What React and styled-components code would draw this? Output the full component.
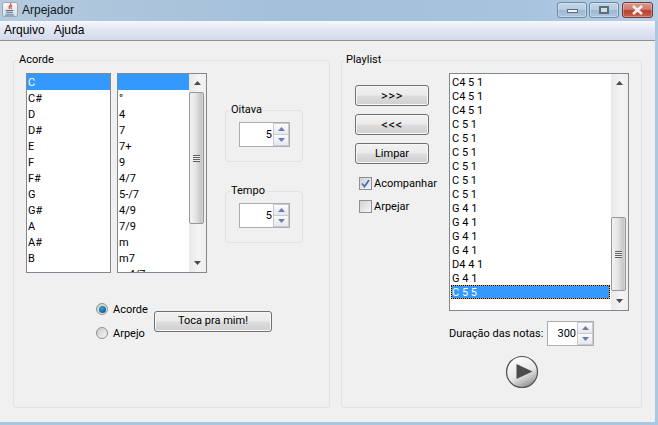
import styled, { createGlobalStyle } from 'styled-components';

const Global = createGlobalStyle`
    html, body {
        margin: 0;
        padding: 0;
        background: #f0f0f0;
    }
    * {
        box-sizing: border-box;
    }
`;

const Frame = styled.div`
    width: 658px;
    height: 425px;
    display: flex;
    flex-direction: column;
    overflow: hidden;
    font-family: Roboto, 'Liberation Sans', Arial, sans-serif;
    font-size: 11px;
    color: #000;
    background: #a9c8e2;
`;

const TitleBar = styled.div`
    height: 21px;
    flex: none;
    display: flex;
    align-items: center;
    padding: 0 5px 2px 2px;
    background: linear-gradient(90deg, #b4cade 0%, #a3bfda 45%, #a7c3de 80%, #b5cfe6 100%);
`;

const AppIcon = styled.div`
    width: 16px;
    height: 15px;
    flex: none;
    border: 1px solid #9aa7b5;
    border-radius: 2px;
    background: linear-gradient(#f7f7f7, #d8dde2);
    display: flex;
    align-items: center;
    justify-content: center;
`;

const Title = styled.span`
    margin-left: 4px;
    font-family: 'Liberation Sans', Arial, sans-serif;
    font-size: 12px;
    flex: 1;
    color: #10171f;
`;

const WinButton = styled.div`
    width: ${(props) => (props.close ? 31 : 30)}px;
    height: 16px;
    margin-left: ${(props) => (props.close ? 3 : 2)}px;
    border: 1px solid ${(props) => (props.close ? '#6e3a3a' : '#6f8aa6')};
    border-radius: 3px;
    display: flex;
    align-items: center;
    justify-content: center;
    background: ${(props) =>
        props.close
            ? 'linear-gradient(#dc9a8e 0%, #cf7a6c 45%, #b8402f 55%, #c9604f 100%)'
            : 'linear-gradient(#c3d6e8 0%, #b7cde2 45%, #9db7d2 55%, #b0c8df 100%)'};
    box-shadow: inset 0 0 0 1px rgba(255, 255, 255, 0.3);
`;

const MinGlyph = styled.div`
    width: 11px;
    height: 4px;
    margin-top: 3px;
    background: #f2f4f6;
    border: 1px solid #5a6b80;
`;

const MaxGlyph = styled.div`
    width: 10px;
    height: 8px;
    background: #d4dde6;
    border: 2px solid #5d6b7b;
`;

const MenuBar = styled.div`
    height: 20px;
    flex: none;
    display: flex;
    align-items: center;
    gap: 9px;
    padding: 0 0 2px 4px;
    font-family: 'Liberation Sans', Arial, sans-serif;
    font-size: 12px;
    background: linear-gradient(#f6f8fd 0%, #e4e8f4 40%, #d3d9ec 100%);
    border-bottom: 1px solid #8e9297;
    margin-right: 3px;
`;

const Content = styled.div`
    flex: 1;
    display: flex;
    gap: 11px;
    align-items: flex-start;
    padding: 12px 0 0 13px;
    margin-right: 3px;
    margin-bottom: 3px;
    background: #f0f0f0;
`;

const Panel = styled.fieldset`
    margin: 0;
    padding: 0;
    min-width: 0;
    width: ${(props) => props.width}px;
    height: 355px;
    border: 1px solid #dce3e9;
    border-radius: 3px;
`;

const Legend = styled.legend`
    padding: 0 1px;
    margin-left: ${(props) => props.inset}px;
    height: 14px;
    line-height: 14px;
`;

const PanelBody = styled.div`
    display: flex;
    flex-direction: column;
    padding: 6px 0 0 12px;
`;

const TopRow = styled.div`
    display: flex;
`;

const ListBox = styled.div`
    width: ${(props) => props.width}px;
    height: ${(props) => props.height}px;
    margin-right: ${(props) => props.gap || 0}px;
    flex: none;
    display: flex;
    overflow: hidden;
    background: #fff;
    border: 1px solid #828790;
`;

const Rows = styled.div`
    flex: 1;
    min-width: 0;
    overflow: hidden;
`;

const PlaylistRows = styled(Rows)`
    padding: 1px 1px 0 1px;
`;

const Row = styled.div`
    height: ${(props) => props.h}px;
    line-height: ${(props) => props.h + 1}px;
    padding-left: ${(props) => props.indent}px;
    white-space: pre;
    background: ${(props) => (props.selected ? '#3399ff' : 'transparent')};
    color: ${(props) => (props.selected ? '#fff' : '#000')};
`;

const FocusedRow = styled(Row)`
    box-shadow: inset 0 0 0 1px #f0a030;
    outline: 1px dotted #000;
    outline-offset: -1px;
`;

const ScrollTrack = styled.div`
    width: 17px;
    flex: none;
    display: flex;
    flex-direction: column;
    background: linear-gradient(90deg, #e8e8e8, #f4f4f4 60%, #eeeeee);
`;

const ScrollArrow = styled.div`
    height: 18px;
    flex: none;
    display: flex;
    align-items: center;
    justify-content: center;
`;

const ScrollLane = styled.div`
    flex: 1;
    padding-top: ${(props) => props.offset}px;
`;

const Thumb = styled.div`
    width: 15px;
    height: ${(props) => props.height}px;
    border: 1px solid #989898;
    border-radius: 2px;
    display: flex;
    align-items: center;
    justify-content: center;
    background: linear-gradient(90deg, #f2f2f2 0%, #e4e4e4 45%, #c6c6c6 85%, #d8d8d8 100%);
`;

const Grip = styled.div`
    width: 7px;
    height: 7px;
    background: repeating-linear-gradient(#5f5f5f 0 1px, #eeeeee 1px 2px);
`;

const Groups = styled.div`
    margin-left: 18px;
    margin-top: 30px;
    display: flex;
    flex-direction: column;
    gap: 22px;
`;

const Group = styled.fieldset`
    margin: 0;
    padding: 5px 0 0 13px;
    min-width: 0;
    width: 78px;
    height: 59px;
    border: 1px solid #dce3e9;
    border-radius: 4px;
`;

const Spinner = styled.div`
    width: ${(props) => props.width}px;
    height: 25px;
    flex: none;
    display: flex;
    background: #fff;
    border: 1px solid #abadb3;
`;

const SpinValue = styled.div`
    flex: 1;
    text-align: right;
    line-height: 24px;
    padding-right: 1px;
`;

const SpinButtons = styled.div`
    width: 16px;
    flex: none;
    display: flex;
    flex-direction: column;
    padding: 1px;
    gap: 1px;
    background: #c8cacd;
`;

const SpinButton = styled.div`
    flex: 1;
    display: flex;
    align-items: center;
    justify-content: center;
    background: linear-gradient(#fbfbfb, #e6e8ee);
`;

const BottomRow = styled.div`
    display: flex;
    align-items: center;
    margin-top: 24px;
    padding-left: 70px;
`;

const RadioColumn = styled.div`
    width: 58px;
    display: flex;
    flex-direction: column;
`;

const OptionRow = styled.div`
    height: ${(props) => props.h}px;
    display: flex;
    align-items: center;
    gap: ${(props) => props.gap}px;
`;

const Radio = styled.div`
    width: 12px;
    height: 12px;
    flex: none;
    border-radius: 50%;
    border: 1px solid #8e8f8f;
    display: flex;
    align-items: center;
    justify-content: center;
    background: linear-gradient(135deg, #c9c9c9, #f8f8f8);
`;

const RadioDot = styled.div`
    width: 7px;
    height: 7px;
    border-radius: 50%;
    background: radial-gradient(circle at 40% 35%, #37a6d8, #0d5f8e 70%, #0a3f63);
`;

const Button = styled.div`
    width: ${(props) => props.width}px;
    height: 21px;
    border: 1px solid #707070;
    border-radius: 3px;
    display: flex;
    align-items: center;
    justify-content: center;
    padding-bottom: 1px;
    background: linear-gradient(#f2f2f2 0%, #ebebeb 48%, #dddddd 52%, #cfcfcf 100%);
    box-shadow: inset 0 0 0 1px #f8f8f8;
`;

const ChevronButton = styled(Button)`
    font-size: 13px;
    letter-spacing: 0.5px;
`;

const PlaylistBody = styled(PanelBody)`
    flex-direction: row;
    padding-left: 13px;
    gap: 20px;
`;

const Controls = styled.div`
    width: 74px;
    flex: none;
    padding-top: 12px;
    display: flex;
    flex-direction: column;
    gap: 8px;
`;

const Checks = styled.div`
    display: flex;
    flex-direction: column;
    padding-left: 4px;
    white-space: nowrap;
`;

const CheckBox = styled.div`
    width: 13px;
    height: 13px;
    flex: none;
    border: 1px solid #8e8f8f;
    display: flex;
    align-items: center;
    justify-content: center;
    background: linear-gradient(135deg, #d2d2d2, #f6f6f6);
`;

const PlaylistColumn = styled.div`
    display: flex;
    flex-direction: column;
`;

const Footer = styled.div`
    width: 145px;
    margin-top: 10px;
    display: flex;
    flex-direction: column;
    align-items: center;
    gap: 9px;
`;

const DurationRow = styled.div`
    width: 100%;
    display: flex;
    align-items: center;
    justify-content: space-between;
    white-space: nowrap;
`;

function Triangle({ up, color = '#4a4a4a', width = 7 }) {
    const h = Math.ceil(width / 2);
    return (
        <svg width={width} height={h} viewBox={`0 0 ${width} ${h}`}>
            <polygon
                points={up ? `0,${h} ${width},${h} ${width / 2},0` : `0,0 ${width},0 ${width / 2},${h}`}
                fill={color}
            />
        </svg>
    );
}

function Scrollbar({ offset, thumb }) {
    return (
        <ScrollTrack>
            <ScrollArrow>
                <Triangle up />
            </ScrollArrow>
            <ScrollLane offset={offset}>
                <Thumb height={thumb}>
                    <Grip />
                </Thumb>
            </ScrollLane>
            <ScrollArrow>
                <Triangle />
            </ScrollArrow>
        </ScrollTrack>
    );
}

function Spin({ value, width }) {
    return (
        <Spinner width={width}>
            <SpinValue>{value}</SpinValue>
            <SpinButtons>
                <SpinButton>
                    <Triangle up color="#6a7cb0" />
                </SpinButton>
                <SpinButton>
                    <Triangle color="#6a7cb0" />
                </SpinButton>
            </SpinButtons>
        </Spinner>
    );
}

const notes = ['C', 'C#', 'D', 'D#', 'E', 'F', 'F#', 'G', 'G#', 'A', 'A#', 'B'];
const chords = ['', '°', '4', '7', '7+', '9', '4/7', '5-/7', '4/9', '7/9', 'm', 'm7', 'm4/7'];
const playlist = [
    'C4 5 1', 'C4 5 1', 'C4 5 1',
    'C 5 1', 'C 5 1', 'C 5 1', 'C 5 1', 'C 5 1', 'C 5 1',
    'G 4 1', 'G 4 1', 'G 4 1', 'G 4 1',
    'D4 4 1', 'G 4 1',
];

export default function App() {
    return (
        <Frame>
            <Global />
            <TitleBar>
                <AppIcon>
                    <svg width="12" height="13" viewBox="0 0 11 12">
                        <path d="M6 0C7 2 3.5 3 5 5.5M7.5 2C6 3 6 4 7 5.5" stroke="#d8502a" strokeWidth="1.1" fill="none" />
                        <path d="M1.5 7h7M2 9h6M1 11h8" stroke="#4a6d9c" strokeWidth="1" fill="none" />
                    </svg>
                </AppIcon>
                <Title>Arpejador</Title>
                <WinButton>
                    <MinGlyph />
                </WinButton>
                <WinButton>
                    <MaxGlyph />
                </WinButton>
                <WinButton close>
                    <svg width="13" height="10" viewBox="0 0 13 10">
                        <path d="M2 1l9 8M11 1l-9 8" stroke="#f4f0ef" strokeWidth="2.6" />
                    </svg>
                </WinButton>
            </TitleBar>
            <MenuBar>
                <span>Arquivo</span>
                <span>Ajuda</span>
            </MenuBar>
            <Content>
                <Panel width={317}>
                    <Legend inset={4}>Acorde</Legend>
                    <PanelBody>
                        <TopRow>
                            <ListBox width={85} height={200} gap={6}>
                                <Rows>
                                    {notes.map((n, i) => (
                                        <Row h={16} indent={1} selected={i === 0} key={i}>
                                            {n}
                                        </Row>
                                    ))}
                                </Rows>
                            </ListBox>
                            <ListBox width={90} height={200}>
                                <Rows>
                                    {chords.map((c, i) => (
                                        <Row h={16} indent={1} selected={i === 0} key={i}>
                                            {c}
                                        </Row>
                                    ))}
                                </Rows>
                                <Scrollbar offset={0} thumb={132} />
                            </ListBox>
                            <Groups>
                                <Group>
                                    <Legend inset={-9}>Oitava</Legend>
                                    <Spin value="5" width={51} />
                                </Group>
                                <Group>
                                    <Legend inset={-9}>Tempo</Legend>
                                    <Spin value="5" width={51} />
                                </Group>
                            </Groups>
                        </TopRow>
                        <BottomRow>
                            <RadioColumn>
                                <OptionRow h={24} gap={5}>
                                    <Radio>
                                        <RadioDot />
                                    </Radio>
                                    Acorde
                                </OptionRow>
                                <OptionRow h={24} gap={5}>
                                    <Radio />
                                    Arpejo
                                </OptionRow>
                            </RadioColumn>
                            <Button width={118}>Toca pra mim!</Button>
                        </BottomRow>
                    </PanelBody>
                </Panel>
                <Panel width={301}>
                    <Legend inset={3}>Playlist</Legend>
                    <PlaylistBody>
                        <Controls>
                            <ChevronButton width={74}>&gt;&gt;&gt;</ChevronButton>
                            <ChevronButton width={74}>&lt;&lt;&lt;</ChevronButton>
                            <Button width={74}>Limpar</Button>
                            <Checks>
                                <OptionRow h={23} gap={2}>
                                    <CheckBox>
                                        <svg width="9" height="9" viewBox="0 0 9 9">
                                            <path d="M1 4.5l2.5 3L8 1" stroke="#4a6fb5" strokeWidth="1.8" fill="none" />
                                        </svg>
                                    </CheckBox>
                                    Acompanhar
                                </OptionRow>
                                <OptionRow h={23} gap={2}>
                                    <CheckBox />
                                    Arpejar
                                </OptionRow>
                            </Checks>
                        </Controls>
                        <PlaylistColumn>
                            <ListBox width={180} height={238}>
                                <PlaylistRows>
                                    {playlist.map((p, i) => (
                                        <Row h={14} indent={1} key={i}>
                                            {p}
                                        </Row>
                                    ))}
                                    <FocusedRow h={14} indent={1} selected>
                                        C 5 5
                                    </FocusedRow>
                                </PlaylistRows>
                                <Scrollbar offset={125} thumb={74} />
                            </ListBox>
                            <Footer>
                                <DurationRow>
                                    Duração das notas:
                                    <Spin value="300" width={47} />
                                </DurationRow>
                                <svg width="34" height="34" viewBox="0 0 34 34">
                                    <defs>
                                        <linearGradient id="playFill" x1="0.2" y1="0" x2="0.7" y2="1">
                                            <stop offset="0" stopColor="#ffffff" />
                                            <stop offset="0.6" stopColor="#e6e6e6" />
                                            <stop offset="1" stopColor="#8d8d8d" />
                                        </linearGradient>
                                    </defs>
                                    <circle cx="17" cy="17" r="15.5" fill="url(#playFill)" stroke="#555" strokeWidth="1.2" />
                                    <polygon points="11.5,9 27.5,16.5 11.5,24" fill="#4d4d4d" />
                                </svg>
                            </Footer>
                        </PlaylistColumn>
                    </PlaylistBody>
                </Panel>
            </Content>
        </Frame>
    );
}
